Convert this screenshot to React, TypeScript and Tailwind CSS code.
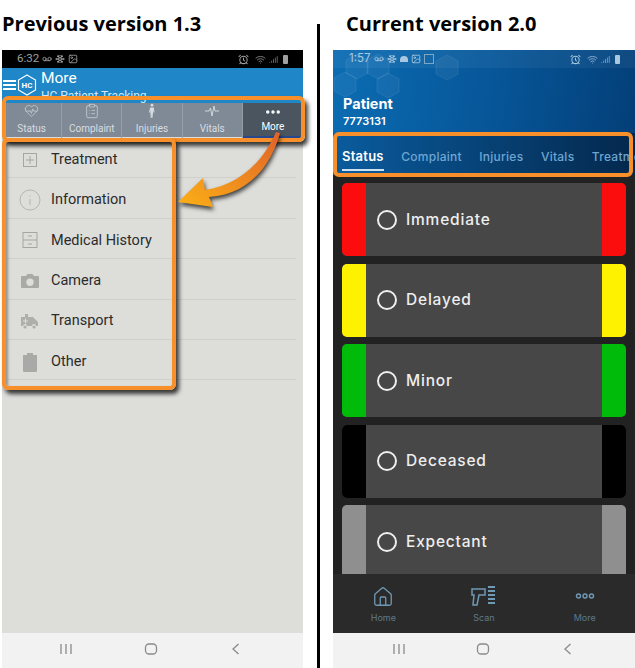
import { AlarmClock, ClipboardList, HeartPulse, Home, Image, MoreHorizontal, Signal, Snowflake, Voicemail, Wifi } from 'lucide-react'
import type { ReactNode } from 'react'

const oldTabs: { label: string; icon: ReactNode; active?: boolean }[] = [
  { label: 'Status', icon: <HeartPulse size={15} strokeWidth={1} /> },
  { label: 'Complaint', icon: <ClipboardList size={16} strokeWidth={1} /> },
  {
    label: 'Injuries',
    icon: (
      <svg width="16" height="16" viewBox="0 0 16 16" fill="currentColor">
        <circle cx="8" cy="2.200" r="1.400" />
        <path d="M6.200 4.400h3.600l.7 5h-1l-.4-2.600-.4 8.200H8.300L8 10.500 7.700 15H6.700l-.4-8.200-.4 2.600h-1z" />
      </svg>
    ),
  },
  {
    label: 'Vitals',
    icon: (
      <svg width="16" height="16" viewBox="0 0 16 16" fill="none" stroke="currentColor" strokeWidth="0.900">
        <path d="M1 8h4l1.500-3 1.500 8 2-10 1 5h4" />
      </svg>
    ),
  },
  { label: 'More', icon: <MoreHorizontal size={18} strokeWidth={2.600} />, active: true },
]

const oldMenu: { label: string; icon: ReactNode }[] = [
  {
    label: 'Treatment',
    icon: (
      <svg width="18" height="18" viewBox="0 0 18 18" fill="none" stroke="#a5a6a3">
        <rect x="2.500" y="2.500" width="13" height="13" />
        <path d="M9 5v8M5 9h8" />
      </svg>
    ),
  },
  {
    label: 'Information',
    icon: (
      <svg width="24" height="24" viewBox="0 0 24 24" fill="none" stroke="#b5b6b3">
        <circle cx="12" cy="12" r="10" />
        <path d="M12 11v6M12 7.500v1.200" />
      </svg>
    ),
  },
  {
    label: 'Medical History',
    icon: (
      <svg width="18" height="18" viewBox="0 0 18 18" fill="none" stroke="#a5a6a3">
        <rect x="2" y="1.500" width="14" height="15" />
        <path d="M2 9h14M7 5h4M7 13h4" />
      </svg>
    ),
  },
  {
    label: 'Camera',
    icon: (
      <svg width="20" height="18" viewBox="0 0 20 18" fill="#a9aaa7">
        <path fillRule="evenodd" d="M2 4h4l1.500-2h5L14 4h4a1 1 0 0 1 1 1v10a1 1 0 0 1-1 1H2a1 1 0 0 1-1-1V5a1 1 0 0 1 1-1zm8 2.500a3.700 3.700 0 1 0 0 7.400 3.700 3.700 0 0 0 0-7.400z" />
      </svg>
    ),
  },
  {
    label: 'Transport',
    icon: (
      <svg width="20" height="18" viewBox="0 0 20 18" fill="#aeafac">
        <path d="M1 5h4V2h3v3h5l5 5v4h-2a2 2 0 0 0-4 0H7a2 2 0 0 0-4 0H1z" />
        <circle cx="5" cy="15" r="1.600" />
        <circle cx="14" cy="15" r="1.600" />
        <path d="M3 9h5M5.500 6.500v5" stroke="#dddeda" />
      </svg>
    ),
  },
  {
    label: 'Other',
    icon: (
      <svg width="16" height="20" viewBox="0 0 16 20" fill="#a9aaa7">
        <path d="M1 3h4V1h6v2h4v16a1 1 0 0 1-1 1H2a1 1 0 0 1-1-1z" />
      </svg>
    ),
  },
]

const triage = [
  { label: 'Immediate', color: 'bg-[#fb0d0d]' },
  { label: 'Delayed', color: 'bg-[#fff200]' },
  { label: 'Minor', color: 'bg-[#00bb0a]' },
  { label: 'Deceased', color: 'bg-black' },
  { label: 'Expectant', color: 'bg-[#8f8f8f]' },
]

function SystemNav({ lines, home, back }: { lines: string; home: string; back: string }) {
  return (
    <div className="relative h-[35px] shrink-0 bg-[#f2f2f2] text-[#8a8a8a]">
      <svg className={lines} width="14" height="12" viewBox="0 0 14 12" fill="none" stroke="currentColor" strokeWidth="1.300">
        <path d="M2 1v10M7 1v10M12 1v10" />
      </svg>
      <svg className={home} width="14" height="14" viewBox="0 0 14 14" fill="none" stroke="currentColor" strokeWidth="1.300">
        <rect x="1.500" y="2" width="11" height="10" rx="3.500" />
      </svg>
      <svg className={back} width="14" height="14" viewBox="0 0 14 14" fill="none" stroke="currentColor" strokeWidth="1.300">
        <path d="M9.500 2L4 7l5.500 5" />
      </svg>
    </div>
  )
}

function StatusIcons() {
  return (
    <div className="flex items-center gap-[3px]">
      <AlarmClock size={11} strokeWidth={2.200} className="mr-[3px]" />
      <Wifi size={11} strokeWidth={1.600} />
      <Signal size={9} strokeWidth={1.600} />
      <span className="ml-[2px] h-[9px] w-[5px] rounded-[1px] bg-current" />
    </div>
  )
}

function OldPhone() {
  return (
    <div className="flex h-[618px] w-[301px] flex-col bg-[#dddeda]">
      <div className="flex h-[18px] shrink-0 items-center justify-between bg-black px-[15px] text-[#a0a0a0]">
        <div className="flex items-center gap-[3px] text-[11.500px]">
          <span>6:32</span>
          <Voicemail size={10} strokeWidth={2} />
          <Snowflake size={10} strokeWidth={2.400} />
          <Image size={10} strokeWidth={2} />
        </div>
        <StatusIcons />
      </div>

      <div className="flex h-[35px] shrink-0 items-start overflow-hidden bg-[#1f86c8] text-white">
        <div className="ml-[1px] mt-[12px] flex w-[13px] flex-col gap-[2px]">
          <span className="h-[2px] bg-white" />
          <span className="h-[2px] bg-white" />
          <span className="h-[2px] bg-white" />
        </div>
        <svg className="ml-[1px] mt-[6px]" width="20" height="22" viewBox="0 0 20 22" fill="none" stroke="white" strokeWidth="1.200">
          <path d="M10 1l8.500 5v10L10 21l-8.500-5V6z" />
          <text x="10" y="14" textAnchor="middle" fill="white" stroke="none" fontSize="8" fontWeight="700">HC</text>
        </svg>
        <div className="ml-[4px]">
          <div className="text-[15.500px] leading-[20px]">More</div>
          <div className="mt-[1px] text-[12px] leading-[14px] text-[#d5e8f4]">HC Patient Tracking</div>
        </div>
      </div>

      <div className="grid h-[34px] shrink-0 grid-cols-5 bg-[#7f8a96] text-[#d9dde1]">
        {oldTabs.map((t) => (
          <div
            key={t.label}
            className={`flex flex-col items-center justify-between border-r border-[#949da8] pb-[3px] text-[10px] leading-[12px] last:border-r-0 ${
              t.active ? 'border-b-2 border-b-[#27488c] bg-[#4a5560] text-white' : ''
            }`}
          >
            {t.icon}
            <span>{t.label}</span>
          </div>
        ))}
      </div>

      <div className="flex-1 pt-[1px]">
        {oldMenu.map((m) => (
          <div key={m.label} className="ml-[5px] mr-[7px] flex h-[40.400px] items-center border-b border-[#cfd0cc] pt-[4px]">
            <div className="flex w-[44px] justify-center pl-[2px]">{m.icon}</div>
            <span className="text-[14.500px] text-[#2b2b2b]">{m.label}</span>
          </div>
        ))}
      </div>

      <SystemNav
        lines="absolute left-[57px] top-[10px]"
        home="absolute left-[142px] top-[9px]"
        back="absolute left-[227px] top-[9px]"
      />
    </div>
  )
}

function NewPhone() {
  return (
    <div className="flex h-[618px] w-[302px] flex-col overflow-hidden bg-[#222222] font-['Inter',sans-serif]">
      <div className="relative h-[83px] shrink-0 overflow-hidden bg-[linear-gradient(100deg,#0b6db3,#07579a_50%,#033f78)]">
        <svg className="absolute left-0 top-0" width="130" height="60" viewBox="0 0 130 60" fill="#ffffff" fillOpacity="0.05" stroke="#ffffff" strokeOpacity="0.08">
          <path d="M12 22l11 6v13l-11 6-11-6V28z" />
          <path d="M55 23l11 6v13l-11 6-11-6V29z" />
          <path d="M45 4l11 6v13l-11 6-11-6V10z" />
          <path d="M24 4l11 6v13l-11 6-11-6V10z" />
          <path d="M114 5l11 6v13l-11 6-11-6V11z" />
        </svg>
        <div className="relative flex h-[18px] items-center justify-between bg-[#ffffff0d] pl-[16px] pr-[15px] text-[#a9c8e0]">
          <div className="flex items-center gap-[3px] text-[11.500px]">
            <span>1:57</span>
            <Voicemail size={10} strokeWidth={2} />
            <Snowflake size={10} strokeWidth={2.400} />
            <span className="h-[6px] w-[8px] rounded-t-sm bg-current" />
            <Image size={10} strokeWidth={2} />
            <span className="h-[10px] w-[10px] border border-[#7da6c5]" />
          </div>
          <StatusIcons />
        </div>
        <div className="relative ml-[10px] mt-[28px] text-[14.500px] font-bold leading-[16px] text-white">Patient</div>
        <div className="relative ml-[10px] mt-[3px] text-[11px] font-semibold leading-[13px] text-white">7773131</div>
      </div>

      <div className="flex h-[42px] shrink-0 items-center gap-[17.500px] overflow-hidden whitespace-nowrap bg-[linear-gradient(90deg,#0a5c9e,#04284d)] pl-[9px] pt-[5px] text-[12px] font-medium tracking-[0.25px] text-[#6ea6d3]">
        <span className="-mb-[5px] border-b-2 border-[#cfe0ee] pb-[3px] text-[13px] font-semibold text-white">Status</span>
        <span>Complaint</span>
        <span>Injuries</span>
        <span>Vitals</span>
        <span>Treatment</span>
      </div>

      <div className="flex h-[399px] shrink-0 flex-col gap-[7.500px] overflow-hidden px-[9px] pt-[8px]">
        {triage.map((t) => (
          <div key={t.label} className="flex h-[73px] shrink-0 overflow-hidden rounded-[5px] bg-[#474747]">
            <div className={`w-[24px] shrink-0 ${t.color}`} />
            <div className="flex flex-1 items-center gap-[9px] pl-[11px] text-[15.500px] font-medium tracking-[0.8px] text-[#eeeeee]">
              <span className="h-[20px] w-[20px] rounded-full border-2 border-[#eeeeee]" />
              {t.label}
            </div>
            <div className={`w-[24px] shrink-0 ${t.color}`} />
          </div>
        ))}
      </div>

      <div className="grid h-[59px] shrink-0 grid-cols-3 bg-[#2a2a2a] pt-[12px] text-[9px] text-[#5d7a8c]">
        <div className="flex flex-col items-center">
          <Home size={22} strokeWidth={1.400} className="text-[#6f9ab5]" />
          <span className="mt-[3px]">Home</span>
        </div>
        <div className="flex flex-col items-center">
          <svg width="26" height="22" viewBox="0 0 26 22" fill="none" stroke="#6f9ab5" strokeWidth="1.500">
            <path d="M1 3h13v6H8l-2 10H2l1-10H1z" />
            <path d="M17 1h7M17 5h7M17 9h7M17 13h7M17 17h7" strokeWidth="2" />
          </svg>
          <span className="mt-[3px]">Scan</span>
        </div>
        <div className="flex flex-col items-center">
          <svg className="mt-[5px]" width="20" height="10" viewBox="0 0 20 10" fill="none" stroke="#6f9ab5" strokeWidth="1.400">
            <circle cx="3.500" cy="5" r="2" />
            <circle cx="10" cy="5" r="2" />
            <circle cx="16.500" cy="5" r="2" />
          </svg>
          <span className="mt-[10px]">More</span>
        </div>
      </div>

      <SystemNav
        lines="absolute left-[59px] top-[10px]"
        home="absolute left-[143px] top-[9px]"
        back="absolute left-[228px] top-[9px]"
      />
    </div>
  )
}

export default function App() {
  return (
    <div className="relative h-[668px] w-[635px] overflow-hidden bg-white font-['Roboto',sans-serif]">
      <div className="flex">
        <div className="ml-[2px] w-[301px]">
          <h1 className="flex h-[50px] items-start pt-[10px] font-['Open_Sans',sans-serif] text-[20px] font-bold leading-[28px] text-black">
            Previous version 1.3
          </h1>
          <OldPhone />
        </div>
        <div className="ml-[14px] mt-[24px] h-[644px] w-[3px] bg-black" />
        <div className="ml-[13px] w-[302px]">
          <h1 className="flex h-[50px] items-start pl-[13px] pt-[10px] font-['Open_Sans',sans-serif] text-[20px] font-bold leading-[28px] text-black">
            Current version 2.0
          </h1>
          <NewPhone />
        </div>
      </div>

      {/* Orange callouts drawn over the screenshots */}
      <div className="absolute left-[2px] top-[96px] h-[46px] w-[303px] rounded-[6px] border-4 border-[#f7902a] shadow-[3px_4px_4px_rgba(0,0,0,0.75)]" />
      <div className="absolute left-[2px] top-[138px] h-[252px] w-[174px] rounded-[6px] border-4 border-[#f7902a] shadow-[3px_4px_4px_rgba(0,0,0,0.75),inset_2px_2px_3px_rgba(0,0,0,0.35)]" />
      <div className="absolute left-[333px] top-[132px] h-[45px] w-[300px] rounded-[6px] border-4 border-[#f7902a]" />
      <svg className="absolute left-0 top-0 drop-shadow-[1px_3px_2px_rgba(0,0,0,0.7)]" width="300" height="220" viewBox="0 0 300 220">
        <defs>
          <linearGradient id="arrow" x1="1" y1="0" x2="0" y2="1">
            <stop offset="0" stopColor="#e0622a" />
            <stop offset="1" stopColor="#fbb016" />
          </linearGradient>
        </defs>
        <path d="M276 132C262 164 238 185 205 190L203 178 178 202 213 207 209 197C245 195 270 170 280 133Z" fill="url(#arrow)" />
      </svg>
    </div>
  )
}
